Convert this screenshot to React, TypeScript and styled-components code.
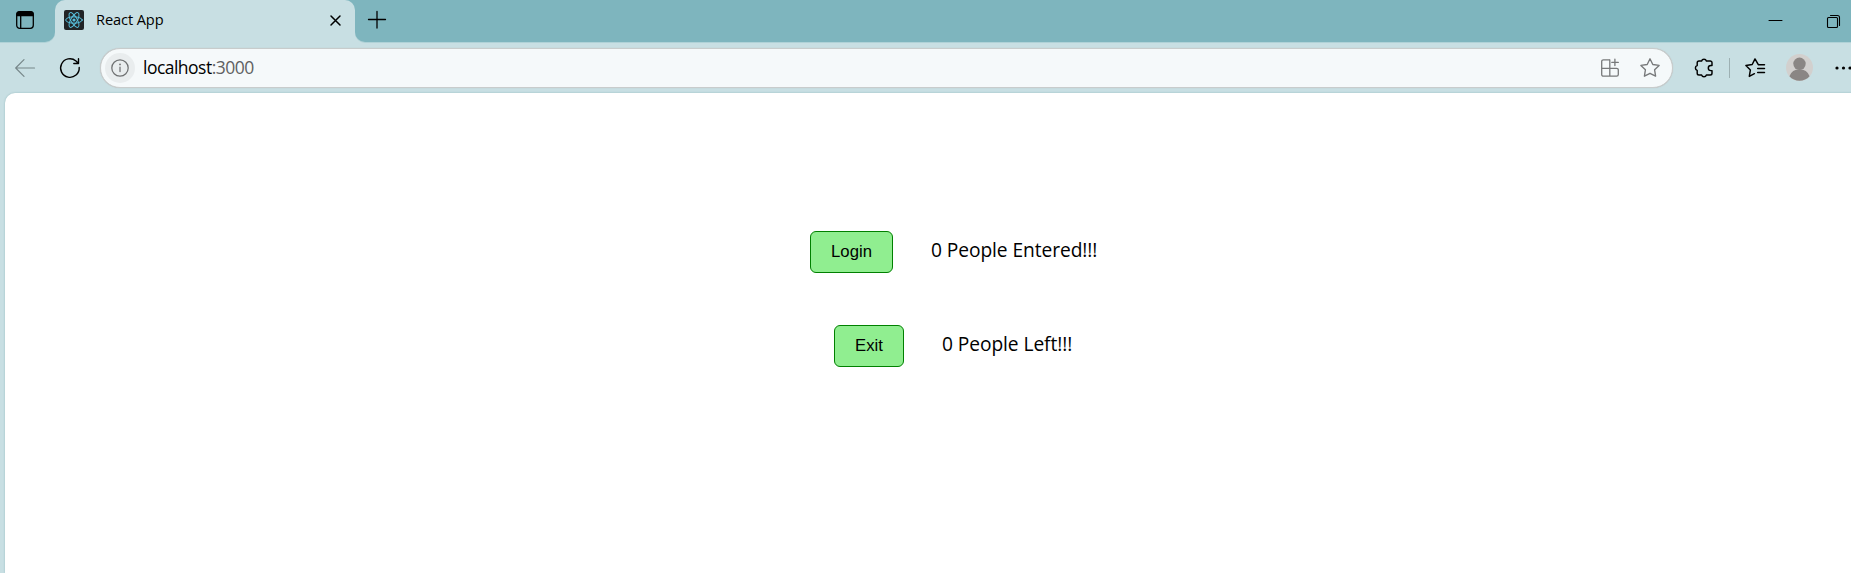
import React from 'react';
import styled, { createGlobalStyle } from 'styled-components';

const GlobalStyle = createGlobalStyle`
  * { box-sizing: border-box; }
  body { margin: 0; overflow: hidden; }
`;

const Browser = styled.div`
  width: 100vw;
  height: 100vh;
  overflow: hidden;
  display: flex;
  flex-direction: column;
  background: #c8dfe3;
  color: #000;
  font-family: 'Open Sans', 'Noto Sans', sans-serif;
`;

const TabStrip = styled.header`
  display: flex;
  height: 42px;
  flex: none;
`;

const StripSection = styled.div<{ $side: 'left' | 'right' }>`
  display: flex;
  background: #7eb5be;
  box-shadow: 0 1px 0 #b0d2d7;
  ${(p) =>
    p.$side === 'left'
      ? 'width: 55px; padding: 11px 0 0 16px; border-bottom-right-radius: 10px;'
      : 'flex: 1; padding: 11px 10px 0 13px; border-bottom-left-radius: 10px;'}
`;

const TabSlot = styled.div`
  width: 300px;
  background: #7eb5be;
`;

const Tab = styled.div`
  height: 43px;
  display: flex;
  align-items: flex-start;
  padding: 10px 14px 0 9px;
  background: #c8dfe3;
  border-radius: 10px 10px 0 0;
`;

const TabTitle = styled.span`
  flex: 1;
  margin-left: 12px;
  font-size: 14.6px;
  line-height: 18px;
  letter-spacing: -0.1px;
`;

const Icon = styled.svg`
  display: block;
  flex: none;
  overflow: visible;
  fill: none;
  stroke: currentColor;
  stroke-linecap: round;
  stroke-linejoin: round;
`;

const CloseIcon = styled(Icon)`
  margin-top: 5px;
`;

const WindowControls = styled.div`
  display: flex;
  align-items: center;
  gap: 45px;
  margin-left: auto;
  height: 21px;
`;

const Toolbar = styled.nav`
  display: flex;
  align-items: center;
  height: 51px;
  padding: 0 0 0 15px;
  flex: none;
`;

const NavButtons = styled.div`
  display: flex;
  align-items: center;
  flex: none;
  gap: 25px;
  width: 85px;
`;

const AddressBar = styled.div`
  display: flex;
  align-items: center;
  flex: none;
  width: 1573px;
  height: 40px;
  padding: 0 12px 0 4px;
  border: 1px solid #c8cccc;
  border-radius: 20px;
  background: #f5f9fa;
  box-shadow: 0 0 1px #bbb;
`;

const InfoBadge = styled.span`
  display: flex;
  align-items: center;
  justify-content: center;
  width: 30px;
  height: 30px;
  border-radius: 50%;
  background: #e9edee;
  color: #6f7172;
`;

const Url = styled.span`
  flex: 1;
  margin: 0 0 2px 8px;
  font-size: 17.5px;
  line-height: 24px;
  letter-spacing: -0.52px;
`;

const Port = styled.span`
  color: #5f6162;
`;

const AddressActions = styled.div`
  display: flex;
  align-items: center;
  gap: 21px;
  color: #77797a;
`;

const Extensions = styled.div`
  display: flex;
  align-items: center;
  flex: none;
  margin-left: 21px;
`;

const Divider = styled.span`
  width: 1px;
  height: 20px;
  margin: 0 15px;
  background: #9db0b3;
`;

const Avatar = styled(Icon)`
  margin: 0 22px 0 21px;
`;

const Page = styled.main`
  flex: 1;
  width: 1897px;
  margin-left: 5px;
  padding-top: 138px;
  display: flex;
  flex-direction: column;
  gap: 52px;
  background: #fff;
  border-top-left-radius: 10px;
  box-shadow: 0 0 2px #8fb5ba;
`;

const CounterRow = styled.section`
  display: flex;
  justify-content: center;
  align-items: center;
  gap: 38px;
  height: 42px;
`;

const CounterButton = styled.button<{ $width: number }>`
  width: ${(p) => p.$width}px;
  height: 42px;
  padding: 0;
  border: 1px solid #008000;
  border-radius: 6px;
  background: #90ee90;
  color: #000;
  font: 16.7px/40px 'Liberation Sans', Arial, sans-serif;
`;

const CounterText = styled.p<{ $width: number }>`
  width: ${(p) => p.$width}px;
  margin: 0 0 5px;
  white-space: nowrap;
  font-size: 19.2px;
  line-height: 26px;
  letter-spacing: -0.08px;
`;

const counters = [
  { action: 'Login', label: 'People Entered!!!', button: 83, text: 166 },
  { action: 'Exit', label: 'People Left!!!', button: 70, text: 131 },
];

function Counter({ action, label, button, text }: (typeof counters)[number]) {
  const [count, setCount] = React.useState(0);
  return (
    <CounterRow>
      <CounterButton $width={button} onClick={() => setCount(count + 1)}>{action}</CounterButton>
      <CounterText $width={text}>{count} {label}</CounterText>
    </CounterRow>
  );
}

export default function App() {
  return (
    <>
      <GlobalStyle />
      <Browser>
        <TabStrip>
          <StripSection $side="left">
            <Icon width="18" height="18" viewBox="0 0 18 18" strokeWidth="1.3">
              <rect x=".7" y=".7" width="16.6" height="16.6" rx="3" />
              <path d="M1 4V3a2 2 0 0 1 2-2h12a2 2 0 0 1 2 2v1.5H1z" fill="currentColor" />
              <path d="M4.7 5v12" />
            </Icon>
          </StripSection>
          <TabSlot>
            <Tab>
              <Icon width="20" height="20" viewBox="0 0 20 20" strokeWidth="1" color="#58bfdc">
                <rect width="20" height="20" rx="2" fill="#222426" stroke="none" />
                <ellipse cx="10" cy="10" rx="8.3" ry="3.2" />
                <ellipse cx="10" cy="10" rx="8.3" ry="3.2" transform="rotate(60 10 10)" />
                <ellipse cx="10" cy="10" rx="8.3" ry="3.2" transform="rotate(120 10 10)" />
                <circle cx="10" cy="10" r="1.6" fill="currentColor" stroke="none" />
              </Icon>
              <TabTitle>React App</TabTitle>
              <CloseIcon width="11" height="11" viewBox="0 0 11 11" strokeWidth="1.5">
                <path d="m1 1 9 9M10 1l-9 9" />
              </CloseIcon>
            </Tab>
          </TabSlot>
          <StripSection $side="right">
            <Icon width="18" height="18" viewBox="0 0 18 18" strokeWidth="1.3">
              <path d="M.5 8.5h17M9 .5v16.5" />
            </Icon>
            <WindowControls>
              <Icon width="13" height="13" viewBox="0 0 13 13" strokeWidth="1" strokeLinecap="butt">
                <path d="M0 5.5h13" />
              </Icon>
              <Icon width="14" height="14" viewBox="0 0 14 14" strokeWidth="1.1">
                <rect x=".5" y="2.5" width="10" height="10" rx="1" />
                <path d="M3.5.5h7a2 2 0 0 1 2 2v8" />
              </Icon>
            </WindowControls>
          </StripSection>
        </TabStrip>
        <Toolbar>
          <NavButtons>
            <Icon width="20" height="18" viewBox="0 0 20 18" strokeWidth="1.2" color="#77878a">
              <path d="M19.5 9H.7M9 .7.7 9 9 17.3" />
            </Icon>
            <Icon width="20" height="20" viewBox="0 0 20 20" strokeWidth="1.4">
              <path d="M19.2 9.5A9.3 9.3 0 1 1 16 3l2.5 2.5M18.5.8v4.7h-4.7" />
            </Icon>
          </NavButtons>
          <AddressBar>
            <InfoBadge>
              <Icon width="18" height="18" viewBox="0 0 18 18" strokeWidth="1.25">
                <circle cx="9" cy="9" r="8.2" />
                <path d="M9 8v4.5" />
                <circle cx="9" cy="5.4" r=".9" fill="currentColor" stroke="none" />
              </Icon>
            </InfoBadge>
            <Url>localhost<Port>:3000</Port></Url>
            <AddressActions>
              <Icon width="18" height="18" viewBox="0 0 18 18" strokeWidth="1.3">
                <path d="M8.6.8H2.4A1.7 1.7 0 0 0 .7 2.5v13a1.7 1.7 0 0 0 1.7 1.7h13.2a1.7 1.7 0 0 0 1.7-1.7V11a1.7 1.7 0 0 0-1.7-1.7H.7M8.8.8v16.4M13.9.2v6.4M10.8 3.4h6.5" />
              </Icon>
              <Icon width="20" height="20" viewBox="0 0 20 20" strokeWidth="1.35">
                <path d="m10 .8 2.8 5.7 6.3.9-4.5 4.4 1 6.4L10 15.3l-5.6 2.9 1-6.4L.9 7.4l6.3-.9z" />
              </Icon>
            </AddressActions>
          </AddressBar>
          <Extensions>
            <Icon width="20" height="20" viewBox="0 0 20 20" strokeWidth="1.45">
              <path d="M5 3h2.6a2.5 2.5 0 0 1 4.8 0h3.8a1.8 1.8 0 0 1 1.8 1.8v2.6h-1.1a2.6 2.6 0 0 0 0 5.2H18v2.6a1.8 1.8 0 0 1-1.8 1.8h-3.8a2.5 2.5 0 0 1-4.8 0H5a1.8 1.8 0 0 1-1.8-1.8v-2.8a2.5 2.5 0 0 1 0-4.8V4.8A1.8 1.8 0 0 1 5 3z" />
            </Icon>
            <Divider />
            <Icon width="20" height="20" viewBox="0 0 20 20" strokeWidth="1.45">
              <path d="M19.5 6.7h-6.2L10 .9 7.2 6.5.9 7.5l4.5 4.4-1.1 6.5 5.1-2.7M12.7 10.5h6.8M12.7 14.4h6.8" />
            </Icon>
            <Avatar width="27" height="27" viewBox="0 0 27 27" strokeWidth="0">
              <circle cx="13.5" cy="13.5" r="13.5" fill="#d2d0ce" />
              <circle cx="13.5" cy="9.8" r="6.2" fill="#8a8684" />
              <path d="M3.4 22.2a10.8 10.8 0 0 1 20.2 0 13.4 13.4 0 0 1-20.2 0z" fill="#8a8684" />
            </Avatar>
            <Icon width="18" height="4" viewBox="0 0 18 4" strokeWidth="0">
              <circle cx="2" cy="2" r="1.6" fill="currentColor" />
              <circle cx="8.5" cy="2" r="1.6" fill="currentColor" />
              <circle cx="15" cy="2" r="1.6" fill="currentColor" />
            </Icon>
          </Extensions>
        </Toolbar>
        <Page>
          {counters.map((item) => <Counter key={item.action} {...item} />)}
        </Page>
      </Browser>
    </>
  );
}
